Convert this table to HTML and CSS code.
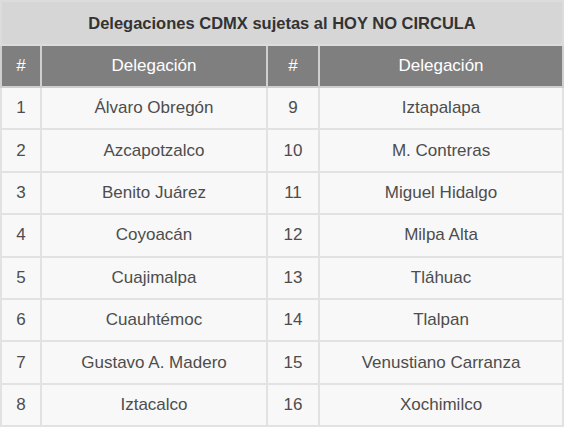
FILE: index.html
```html
<!DOCTYPE html>
<html lang="es">
<head>
<meta charset="utf-8">
<link rel="stylesheet" href="styles.css">
</head>
<body>
<table class="tbl">
  <colgroup>
    <col class="c-num">
    <col class="c-name">
    <col class="c-num2">
    <col class="c-name2">
  </colgroup>
  <thead>
    <tr class="title-row"><th colspan="4">Delegaciones CDMX sujetas al HOY NO CIRCULA</th></tr>
    <tr class="head-row"><th>#</th><th>Delegación</th><th>#</th><th>Delegación</th></tr>
  </thead>
  <tbody>
    <tr><td>1</td><td>Álvaro Obregón</td><td>9</td><td>Iztapalapa</td></tr>
    <tr><td>2</td><td>Azcapotzalco</td><td>10</td><td>M. Contreras</td></tr>
    <tr><td>3</td><td>Benito Juárez</td><td>11</td><td>Miguel Hidalgo</td></tr>
    <tr><td>4</td><td>Coyoacán</td><td>12</td><td>Milpa Alta</td></tr>
    <tr><td>5</td><td>Cuajimalpa</td><td>13</td><td>Tláhuac</td></tr>
    <tr><td>6</td><td>Cuauhtémoc</td><td>14</td><td>Tlalpan</td></tr>
    <tr><td>7</td><td>Gustavo A. Madero</td><td>15</td><td>Venustiano Carranza</td></tr>
    <tr><td>8</td><td>Iztacalco</td><td>16</td><td>Xochimilco</td></tr>
  </tbody>
</table>
</body>
</html>
```
FILE: styles.css
```css
html, body {
  margin: 0;
  padding: 0;
  background: #ffffff;
}
.tbl {
  border-collapse: collapse;
  width: 562px;
  table-layout: fixed;
  font-family: "Liberation Sans", Arial, sans-serif;
  font-size: 17px;
  color: #4d4d4d;
}
.c-num { width: 40px; }
.c-name { width: 226px; }
.c-num2 { width: 52px; }
.c-name2 { width: 244px; }
.tbl th, .tbl td {
  text-align: center;
  padding: 0;
  border: 2px solid #e2e2e2;
}
.title-row th {
  height: 42px;
  background: #d6d6d6;
  color: #333333;
  font-size: 16.5px;
  font-weight: bold;
  border-color: #dcdcdc;
}
.head-row th {
  height: 40px;
  background: #7f7f7f;
  color: #ffffff;
  font-weight: normal;
  border-color: #cfcfcf;
}
.tbl td {
  height: 40.4px;
  background: #f8f8f8;
}
```
